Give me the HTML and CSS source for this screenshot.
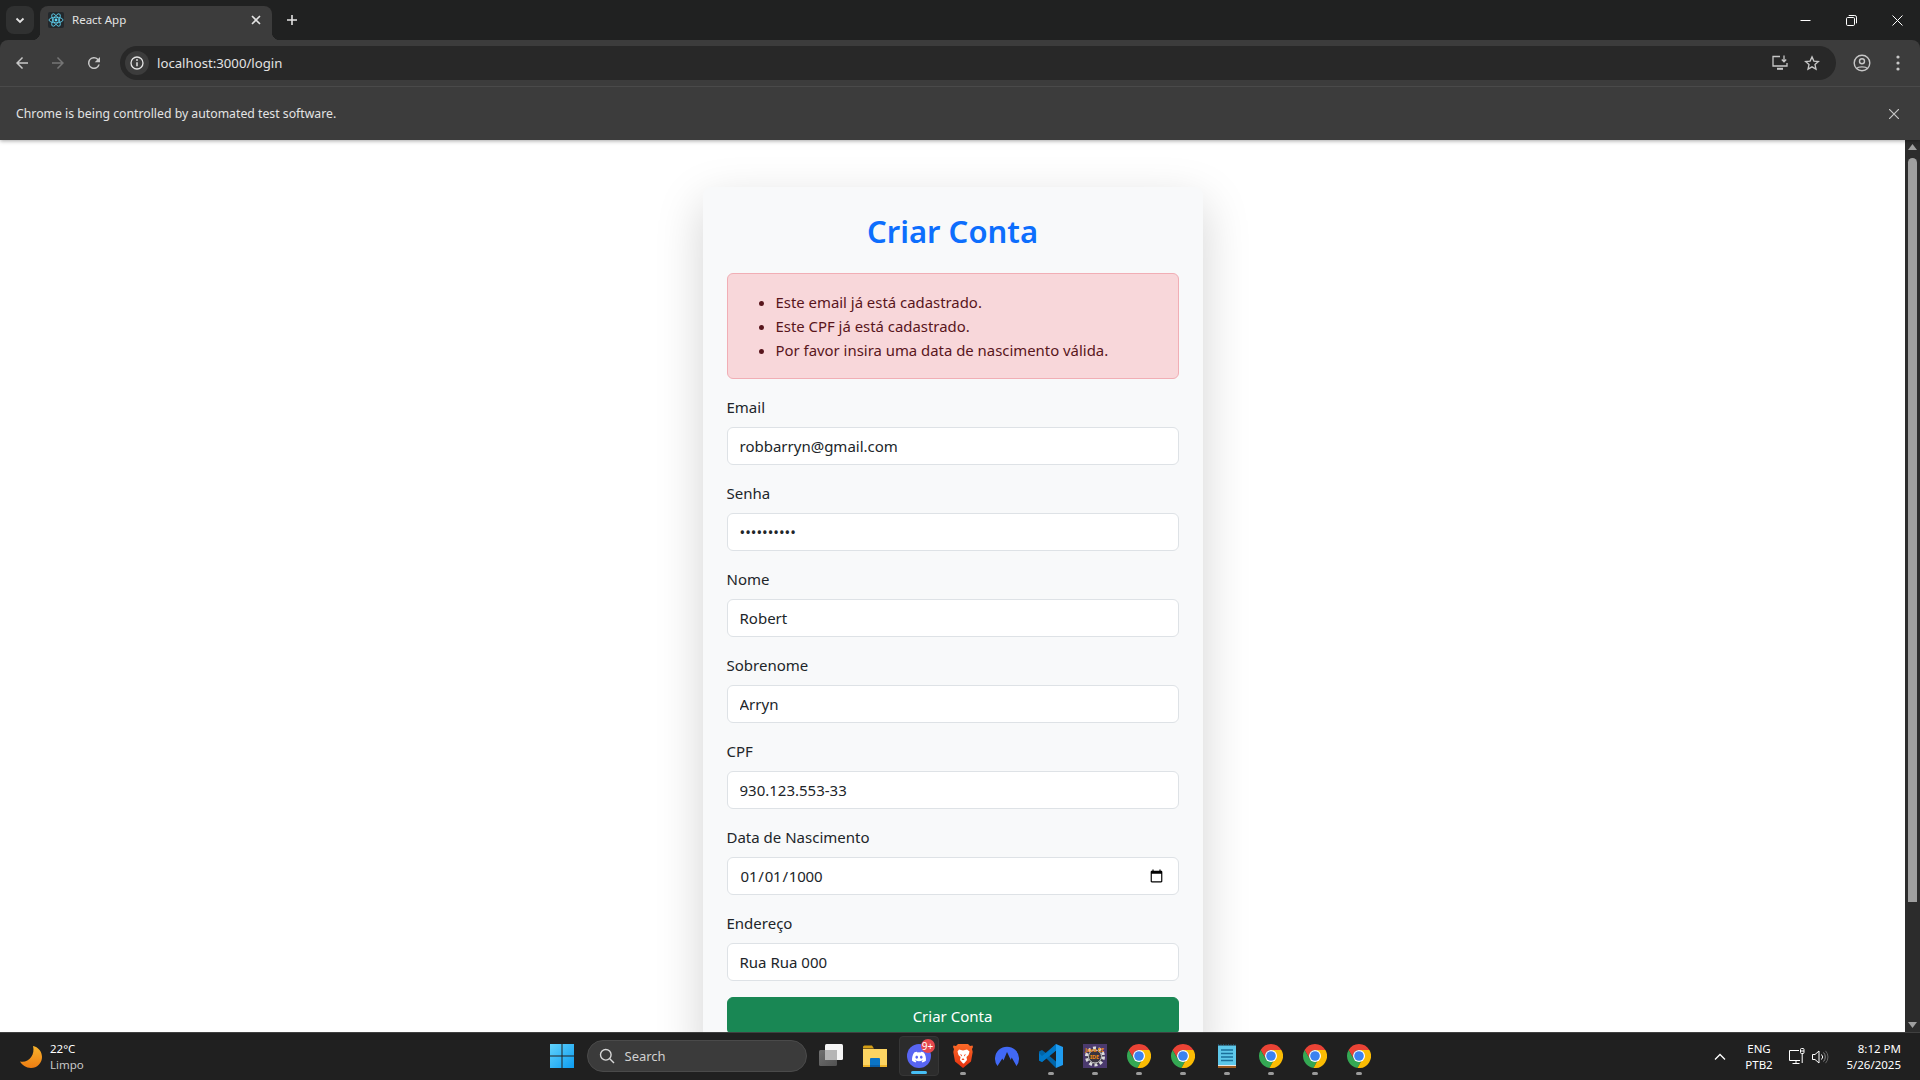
FILE: index.html
```html
<!DOCTYPE html>
<html lang="pt-BR">
<head>
<meta charset="utf-8">
<title>React App</title>
<link rel="stylesheet" href="styles.css">
</head>
<body>
<svg class="defs" width="0" height="0" aria-hidden="true">
  <symbol id="chrome" viewBox="0 0 24 24">
    <path fill="#ea4335" d="M12 0A12 12 0 0 0 1.6 6l5.2 9A6 6 0 0 1 12 6h10.4A12 12 0 0 0 12 0z"/>
    <path fill="#34a853" d="M1.6 6A12 12 0 0 0 10.5 23.9l4.9-8.9a6 6 0 0 1-8.600 0z"/>
    <path fill="#fbbc04" d="M22.4 6H12a6 6 0 0 1 3.400 9l-4.900 8.900A12 12 0 0 0 22.400 6z"/>
    <circle cx="12" cy="12" r="6" fill="#fff"/>
    <circle cx="12" cy="12" r="4.800" fill="#3b82f0"/>
  </symbol>
</svg>

<header class="chrome">
  <div class="tabstrip">
    <div class="tabsearch">
      <svg width="12" height="12" viewBox="0 0 12 12"><path d="M2.500 4.500 6 8l3.500-3.500" fill="none" stroke="#e3e3e3" stroke-width="1.800"/></svg>
    </div>
    <div class="tab">
      <span class="favicon">
        <svg width="16" height="16" viewBox="0 0 16 16" fill="none" stroke="#61dafb" stroke-width=".8">
          <ellipse cx="8" cy="8" rx="7" ry="2.800"/>
          <ellipse cx="8" cy="8" rx="7" ry="2.800" transform="rotate(60 8 8)"/>
          <ellipse cx="8" cy="8" rx="7" ry="2.800" transform="rotate(120 8 8)"/>
          <circle cx="8" cy="8" r="1.400" fill="#61dafb" stroke="none"/>
        </svg>
      </span>
      <span class="tabtitle">React App</span>
      <svg class="tabclose" width="10" height="10" viewBox="0 0 10 10"><path d="M1 1l8 8M9 1l-8 8" stroke="#e3e3e3" stroke-width="1.600"/></svg>
    </div>
    <div class="newtab">
      <svg width="12" height="12" viewBox="0 0 12 12"><path d="M6 1v10M1 6h10" stroke="#e3e3e3" stroke-width="1.600"/></svg>
    </div>
    <div class="winctl">
      <span class="winbtn"><svg width="11" height="11" viewBox="0 0 11 11"><path d="M.5 5.500h10" stroke="#fff"/></svg></span>
      <span class="winbtn"><svg width="11" height="11" viewBox="0 0 11 11" fill="none" stroke="#fff"><rect x=".5" y="2.500" width="8" height="8" rx="1.200"/><path d="M2.700 .5h6.100a1.700 1.700 0 0 1 1.700 1.700v6.100"/></svg></span>
      <span class="winbtn"><svg width="11" height="11" viewBox="0 0 11 11"><path d="M.5 .5l10 10M10.500 .5l-10 10" stroke="#fff"/></svg></span>
    </div>
  </div>

  <div class="toolbar">
    <span class="navbtn"><svg width="18" height="18" viewBox="0 0 24 24" fill="#c7c7c7"><path d="M20 11H7.800l5.600-5.600L12 4l-8 8 8 8 1.400-1.400L7.800 13H20z"/></svg></span>
    <span class="navbtn"><svg width="18" height="18" viewBox="0 0 24 24" fill="#757575"><path d="M4 11h12.200l-5.600-5.600L12 4l8 8-8 8-1.400-1.400 5.600-5.600H4z"/></svg></span>
    <span class="navbtn"><svg width="18" height="18" viewBox="0 0 24 24" fill="#c7c7c7"><path d="M17.650 6.350A8 8 0 1 0 19.730 14h-2.080A6 6 0 1 1 12 6c1.660 0 3.140.69 4.220 1.780L13 11h7V4z"/></svg></span>
    <div class="omnibox">
      <span class="siteinfo"><svg width="16" height="16" viewBox="0 0 16 16" fill="none" stroke="#e3e3e3" stroke-width="1.300"><circle cx="8" cy="8" r="6"/><path d="M8 7.200v4" stroke-width="1.500"/><circle cx="8" cy="5" r=".9" fill="#e3e3e3" stroke="none"/></svg></span>
      <span class="url">localhost:3000/login</span>
      <span class="omniright">
        <svg width="16" height="16" viewBox="0 0 16 16" fill="none" stroke="#c7c7c7" stroke-width="1.300"><path d="M8 1.500H1v9.500h14V8"/><path d="M5 13.800h6" stroke-width="2"/><path d="M12 .5v6M9.800 4.500 12 6.800l2.200-2.300"/></svg>
        <svg width="16" height="16" viewBox="0 0 24 24" fill="none" stroke="#c7c7c7" stroke-width="2"><path d="M12 2.800l2.800 6.300 6.800.7-5.100 4.600 1.500 6.800-6-3.500-6 3.500 1.500-6.800-5.100-4.600 6.800-.7z"/></svg>
      </span>
    </div>
    <span class="profile"><svg width="18" height="18" viewBox="0 0 18 18" fill="none" stroke="#c7c7c7" stroke-width="1.400"><circle cx="9" cy="9" r="7.800"/><circle cx="9" cy="7.200" r="2.500"/><path d="M3.800 14.500C5 12.300 13 12.300 14.200 14.500"/></svg></span>
    <span class="menu"><svg width="4" height="16" viewBox="0 0 4 16" fill="#c7c7c7"><circle cx="2" cy="2" r="1.600"/><circle cx="2" cy="8" r="1.600"/><circle cx="2" cy="14" r="1.600"/></svg></span>
  </div>

  <div class="infobar">
    <span>Chrome is being controlled by automated test software.</span>
    <svg width="10" height="10" viewBox="0 0 10 10"><path d="M0 0l10 10M10 0L0 10" stroke="#c7c7c7" stroke-width="1.200"/></svg>
  </div>
</header>

<main class="viewport">
  <div class="page">
    <section class="card">
      <h2 class="title">Criar Conta</h2>
      <div class="alert">
        <ul>
          <li>Este email já está cadastrado.</li>
          <li>Este CPF já está cadastrado.</li>
          <li>Por favor insira uma data de nascimento válida.</li>
        </ul>
      </div>
      <form>
        <div class="field"><label for="f1">Email</label><input id="f1" type="email" value="robbarryn@gmail.com"></div>
        <div class="field"><label for="f2">Senha</label><input id="f2" type="password" value="1234567890"></div>
        <div class="field"><label for="f3">Nome</label><input id="f3" type="text" value="Robert"></div>
        <div class="field"><label for="f4">Sobrenome</label><input id="f4" type="text" value="Arryn"></div>
        <div class="field"><label for="f5">CPF</label><input id="f5" type="text" value="930.123.553-33"></div>
        <div class="field"><label for="f6">Data de Nascimento</label><input id="f6" type="date" value="1000-01-01"></div>
        <div class="field"><label for="f7">Endereço</label><input id="f7" type="text" value="Rua Rua 000"></div>
        <button class="submit" type="button">Criar Conta</button>
      </form>
    </section>
  </div>
  <div class="scrollbar">
    <svg width="15" height="15" viewBox="0 0 15 15"><path d="M7.500 4 12 10H3z" fill="#9f9f9f"/></svg>
    <div class="track"><div class="thumb"></div></div>
    <svg width="15" height="15" viewBox="0 0 15 15"><path d="M7.500 11 12 5H3z" fill="#9f9f9f"/></svg>
  </div>
</main>

<footer class="taskbar">
  <div class="weather">
    <svg width="24" height="24" viewBox="0 0 24 24"><defs><linearGradient id="moon" x1="0" y1="0" x2="0" y2="1"><stop offset="0" stop-color="#f9b42c"/><stop offset="1" stop-color="#ee7d12"/></linearGradient></defs><path fill="url(#moon)" d="M14 1c5 1 9 5.500 9 11a11 11 0 0 1-11 11C7 23 3 20 1 16.500c8 2 15.500-6 13-15.500z"/></svg>
    <div class="weathertext"><span>22°C</span><span class="dim">Limpo</span></div>
  </div>

  <div class="centerapps">
    <span class="app">
      <svg width="24" height="24" viewBox="0 0 24 24"><defs><linearGradient id="win" x1="0" y1="0" x2="1" y2="1"><stop offset="0" stop-color="#62d2fb"/><stop offset="1" stop-color="#0c9cf0"/></linearGradient></defs><path fill="url(#win)" d="M0 0h11.500v11.500H0zM12.500 0H24v11.500H12.500zM0 12.500h11.500V24H0zM12.500 12.500H24V24H12.500z"/></svg>
    </span>
    <div class="search">
      <svg width="16" height="16" viewBox="0 0 16 16" fill="none" stroke="#d8d8d8" stroke-width="1.400"><circle cx="6.800" cy="6.800" r="5.300"/><path d="M10.800 10.800 15 15"/></svg>
      <span>Search</span>
    </div>
    <span class="app">
      <svg width="24" height="24" viewBox="0 0 24 24"><defs><linearGradient id="tv" x1="0" y1="0" x2="1" y2="1"><stop offset="0" stop-color="#777"/><stop offset="1" stop-color="#555"/></linearGradient></defs><rect x="6" y="0" width="18" height="16" rx="1.500" fill="#f5f5f5"/><rect x="0" y="6" width="18" height="16" rx="1.500" fill="url(#tv)" opacity=".92"/><rect x="6" y="6" width="12" height="10" fill="#b5b5b5"/></svg>
    </span>
    <span class="app">
      <svg width="24" height="22" viewBox="0 0 24 22"><path d="M0 2a1.500 1.500 0 0 1 1.500-1.500H9l2 3H0z" fill="#d59e14"/><path d="M0 4h24v18H0z" fill="#fcd462"/><path d="M7 14a1 1 0 0 1 1-1h8a1 1 0 0 1 1 1v8H7z" fill="#0b74c6"/><path d="M0 20h24v2H0z" fill="#eeb52c"/><path d="M7 20h10v2H7z" fill="#0a5fa8"/></svg>
    </span>
    <span class="app active">
      <svg width="24" height="24" viewBox="0 0 24 24"><circle cx="12" cy="12" r="12" fill="#5865f2"/><path fill="#fff" transform="translate(1.500 2) scale(.875)" d="M17.500 7.500a13 13 0 0 0-3.300-1l-.4.800a12 12 0 0 0-3.600 0l-.4-.8a13 13 0 0 0-3.300 1C4.400 10.700 3.800 13.800 4.100 16.800a13 13 0 0 0 4 2l.9-1.400-1.400-.7.300-.3a9.300 9.300 0 0 0 8.200 0l.3.300-1.400.7.900 1.400a13 13 0 0 0 4-2c.400-3.500-.5-6.500-2.400-9.300zM9.400 14.500c-.8 0-1.500-.8-1.500-1.700s.6-1.700 1.500-1.700 1.500.8 1.500 1.700-.6 1.700-1.500 1.700zm5.200 0c-.8 0-1.500-.8-1.500-1.700s.6-1.700 1.500-1.700 1.500.8 1.500 1.700-.7 1.700-1.500 1.700z"/></svg>
      <span class="badge">9+</span>
      <i class="ind blue"></i>
    </span>
    <span class="app">
      <svg width="20" height="24" viewBox="0 0 20 24"><defs><linearGradient id="brave" x1="0" y1="0" x2="0" y2="1"><stop offset="0" stop-color="#fb6a28"/><stop offset="1" stop-color="#e6300f"/></linearGradient></defs><path fill="url(#brave)" d="M5 0h10l2 2 2.500-.5.500 1.500-1 2 .7 3-1.700 9.500L10 24l-8-6.500L.3 8l.7-3-1-2 .5-1.500L3 2z"/><path fill="#fff" d="M6 5.500l4 1 4-1 2.500 2-1 3.500-2 2 .5 3-3 3.500h-1l-3-3.500.5-3-2-2-1-3.500z"/><path fill="#f1471d" d="M7 10l2 1-.5 1.500zM13 10l-2 1 .5 1.500zM8.500 16h3L10 14z"/></svg>
      <i class="ind"></i>
    </span>
    <span class="app">
      <svg width="24" height="20" viewBox="0 0 24 20"><path fill="#4169f5" d="M2.500 20A12 12 0 1 1 21.500 20l-4.800-8.500-.9 2.500-3.800-8-3.500 8.500-1.200-2z"/></svg>
    </span>
    <span class="app">
      <svg width="24" height="24" viewBox="0 0 24 24"><path fill="#0065a9" d="M17 0 7.500 9.500 3 6 0 7.500v9L3 18l4.500-3.500L17 24V17.500L10.500 12 17 6.500z"/><path fill="#007acc" d="M0 16.500 3 18 17 6.500V0L3 12 0 9z" opacity=".9"/><path fill="#1f9cf0" d="M17 0l7 3v18l-7 3z"/></svg>
      <i class="ind"></i>
    </span>
    <span class="app">
      <span class="javaee">
        <svg width="24" height="24" viewBox="0 0 24 24"><circle cx="12" cy="12.500" r="8.500" fill="#3a3440" stroke="#dcdcdc" stroke-width="3" stroke-dasharray="3 2.400"/><circle cx="12" cy="12.500" r="6.500" fill="none" stroke="#cfcfcf"/></svg>
        <span class="javatext">Java EE<br>IDE</span>
      </span>
      <i class="ind"></i>
    </span>
    <span class="app"><svg width="24" height="24"><use href="#chrome"/></svg><i class="ind"></i></span>
    <span class="app"><svg width="24" height="24"><use href="#chrome"/></svg><i class="ind"></i></span>
    <span class="app">
      <svg width="18" height="24" viewBox="0 0 18 24"><path fill="#5ec8ea" d="M0 1.500h18V21H0z"/><path fill="#9c5a20" d="M0 21h18v3H0z"/><path fill="#e8e8e8" d="M0 21h18v1H0z"/><path stroke="#2a7ea8" stroke-width="1" stroke-dasharray="1 1.500" d="M0 1h18"/><path stroke="#1a6f9a" stroke-width="1.500" d="M3 6h12M3 9.500h12M3 13h12M3 16.500h12"/></svg>
      <i class="ind"></i>
    </span>
    <span class="app"><svg width="24" height="24"><use href="#chrome"/></svg><i class="ind"></i></span>
    <span class="app"><svg width="24" height="24"><use href="#chrome"/></svg><i class="ind"></i></span>
    <span class="app"><svg width="24" height="24"><use href="#chrome"/></svg><i class="ind"></i></span>
  </div>

  <div class="tray">
    <svg class="chev" width="12" height="8" viewBox="0 0 12 8"><path d="M1 6.500l5-5 5 5" fill="none" stroke="#fff" stroke-width="1.300"/></svg>
    <div class="lang"><span>ENG</span><span>PTB2</span></div>
    <svg class="net" width="16" height="17" viewBox="0 0 16 17" fill="none" stroke="#fff" stroke-width="1"><path d="M10 2.500H.5v10H11M3.500 15.500h7M7 12.500v3"/><rect x="11.500" y=".5" width="3.500" height="5" rx="1"/><path d="M13.200 5.500V15M11.500 3h3.500"/></svg>
    <svg class="vol" width="17" height="14" viewBox="0 0 17 14" fill="none" stroke="#fff" stroke-width="1"><path d="M.5 4.500h2.500L7 1v12L3 9.500H.5z"/><path d="M9.500 4.500a3.500 3.500 0 0 1 0 5"/><path d="M11.500 2.500a6.500 6.500 0 0 1 0 9" stroke="#888"/><path d="M13.500 .8a9 9 0 0 1 0 12.400" stroke="#666"/></svg>
    <div class="clock"><span>8:12 PM</span><span>5/26/2025</span></div>
  </div>
</footer>
</body>
</html>
```

FILE: styles.css
```css
* { box-sizing: border-box; }
html, body { height: 100%; }
body {
  margin: 0;
  height: 100vh;
  overflow: hidden;
  display: flex;
  flex-direction: column;
  background: #fff;
  font-family: "Noto Sans", "Open Sans", sans-serif;
  color: #212529;
}
.defs { position: absolute; }

/* Browser chrome */
.chrome { background: #202121; color: #e3e3e3; flex: none; position: relative; z-index: 2; box-shadow: 0 1px 4px rgba(0,0,0,.35); }
.tabstrip { height: 40px; display: flex; align-items: flex-end; padding-left: 6px; }
.tabsearch {
  width: 28px; height: 28px; margin-bottom: 6px; margin-right: 6px;
  border-radius: 8px; background: #303131;
  display: flex; align-items: center; justify-content: center;
}
.tab {
  position: relative; width: 232px; height: 34px; padding: 0 11px 6px 8px;
  background: #3c3c3c; border-radius: 8px 8px 0 0;
  display: flex; align-items: center; gap: 8px;
}
.tab::before, .tab::after { content: ""; position: absolute; bottom: 0; width: 8px; height: 8px; }
.tab::before { left: -8px; background: radial-gradient(circle at 0 0, transparent 8px, #3c3c3c 8.500px); }
.tab::after { right: -8px; background: radial-gradient(circle at 100% 0, transparent 8px, #3c3c3c 8.500px); }
.favicon { width: 16px; height: 16px; background: #23282c; border-radius: 2px; display: flex; }
.tabtitle { flex: 1; font-size: 11.500px; line-height: 16px; }
.newtab { width: 40px; height: 40px; display: flex; align-items: center; justify-content: center; }
.winctl { margin-left: auto; display: flex; height: 40px; }
.winbtn { width: 46px; height: 40px; display: flex; align-items: center; justify-content: center; }

.toolbar {
  height: 47px; background: #3c3c3c; border-bottom: 1px solid #4a4a4a;
  border-radius: 8px 8px 0 0;
  display: flex; align-items: center; padding: 0 0 1px 4px;
}
.navbtn { width: 36px; height: 34px; display: flex; align-items: center; justify-content: center; }
.omnibox {
  flex: 1; height: 34px; margin-left: 8px; background: #282828; border-radius: 17px;
  display: flex; align-items: center; padding: 0 16px 0 5px;
}
.siteinfo { width: 24px; height: 24px; border-radius: 50%; background: #3c3c3c; display: flex; align-items: center; justify-content: center; }
.url { margin-left: 8px; font-size: 13.200px; color: #e3e3e3; }
.omniright { margin-left: auto; display: flex; align-items: center; gap: 16px; }
.profile { width: 34px; display: flex; justify-content: center; margin-left: 9px; }
.menu { width: 36px; display: flex; justify-content: center; margin-left: 1px; margin-right: 4px; }

.infobar {
  height: 53px; background: #3c3c3c; padding: 0 21px 0 16px;
  display: flex; align-items: center; justify-content: space-between;
  font-size: 12.250px;
}

/* Page */
.viewport { flex: 1; min-height: 0; display: flex; }
.page { flex: 1; min-width: 0; overflow: hidden; padding-top: 47px; }
.card {
  width: 500px; margin: 0 auto; padding: 24px;
  background: #f8f9fa; border-radius: 8px;
  box-shadow: 0 16px 48px rgba(0,0,0,.175);
}
.title {
  margin: 0 0 22px; text-align: center;
  font-size: 31px; line-height: 40.400px; font-weight: 600; color: #0d6efd;
}
.alert {
  margin-bottom: 16px; padding: 16px;
  background: #f8d7da; border: 1px solid #f1aeb5; border-radius: 6px;
  color: #58151c; font-size: 14.900px; line-height: 24px;
}
.alert ul { margin: 0; padding-left: 32px; }
.field { margin-bottom: 16px; }
.field label { display: block; margin-bottom: 8px; font-size: 15px; line-height: 24px; }
.field input {
  display: block; width: 100%; height: 38px; padding: 6px 12px;
  background: #fff; border: 1px solid #dee2e6; border-radius: 6px;
  font: 15px/24px "Noto Sans", "Open Sans", sans-serif; color: #212529;
}
.field input[type="date"] { letter-spacing: -.2px; }
.submit {
  display: block; width: 100%; height: 38px; padding: 6px 12px;
  background: #198754; border: 1px solid #198754; border-radius: 6px;
  color: #fff; font: 15px/24px "Noto Sans", "Open Sans", sans-serif;
}

.scrollbar { width: 15px; flex: none; background: #2c2c2c; display: flex; flex-direction: column; }
.track { flex: 1; min-height: 0; padding: 3px 3px 0; }
.thumb { height: 744px; background: #9f9f9f; border-radius: 5px 5px 0 0; }

/* Taskbar */
.taskbar {
  flex: none; height: 48px; border-top: 1px solid #404040;
  background: #202020; color: #fff;
  display: grid; grid-template-columns: 1fr auto 1fr; align-items: center;
  font-size: 11.500px; line-height: 16px;
}
.weather { display: flex; align-items: center; padding-left: 19px; gap: 7px; }
.weathertext { display: flex; flex-direction: column; }
.dim { color: #c8c8c8; }
.centerapps { display: flex; align-items: flex-start; height: 47px; padding-top: 3px; }
.app { position: relative; width: 44px; height: 40px; display: flex; align-items: center; justify-content: center; border-radius: 4px; }
.app.active { width: 40px; margin: 0 2px; background: #2c2c2c; border: 1px solid #363636; }
.ind { position: absolute; bottom: 1px; left: 19px; width: 6px; height: 3px; border-radius: 2px; background: #9a9a9a; }
.ind.blue { left: 11px; width: 16px; background: #47bff5; }
.badge {
  position: absolute; top: 2px; right: 3px; width: 14px; height: 14px; border-radius: 50%;
  background: #e5484d; color: #fff; font-size: 10px; line-height: 14px; text-align: center;
}
.search {
  width: 220px; height: 32px; margin: 4px 2px 0 3px; padding-left: 11px;
  background: #3b3b3b; border: 1px solid #4a4a4a; border-radius: 16px;
  display: flex; align-items: center; gap: 10px;
  color: #d0d0d0; font-size: 13px;
}
.javaee {
  position: relative; width: 24px; height: 24px; background: #4b3a6e;
  display: flex; align-items: center; justify-content: center;
}
.javatext {
  position: absolute; inset: 3px 0 0; text-align: center;
  color: #f08a12; font-size: 5.500px; line-height: 7px; font-weight: 700;
}
.tray { display: flex; align-items: center; justify-content: flex-end; padding-right: 19px; }
.chev { margin-right: 19px; }
.lang { display: flex; flex-direction: column; align-items: center; width: 28px; margin-right: 16px; }
.net { margin-right: 7px; }
.vol { margin-right: 16px; }
.clock { display: flex; flex-direction: column; align-items: flex-end; width: 56px; }
```
